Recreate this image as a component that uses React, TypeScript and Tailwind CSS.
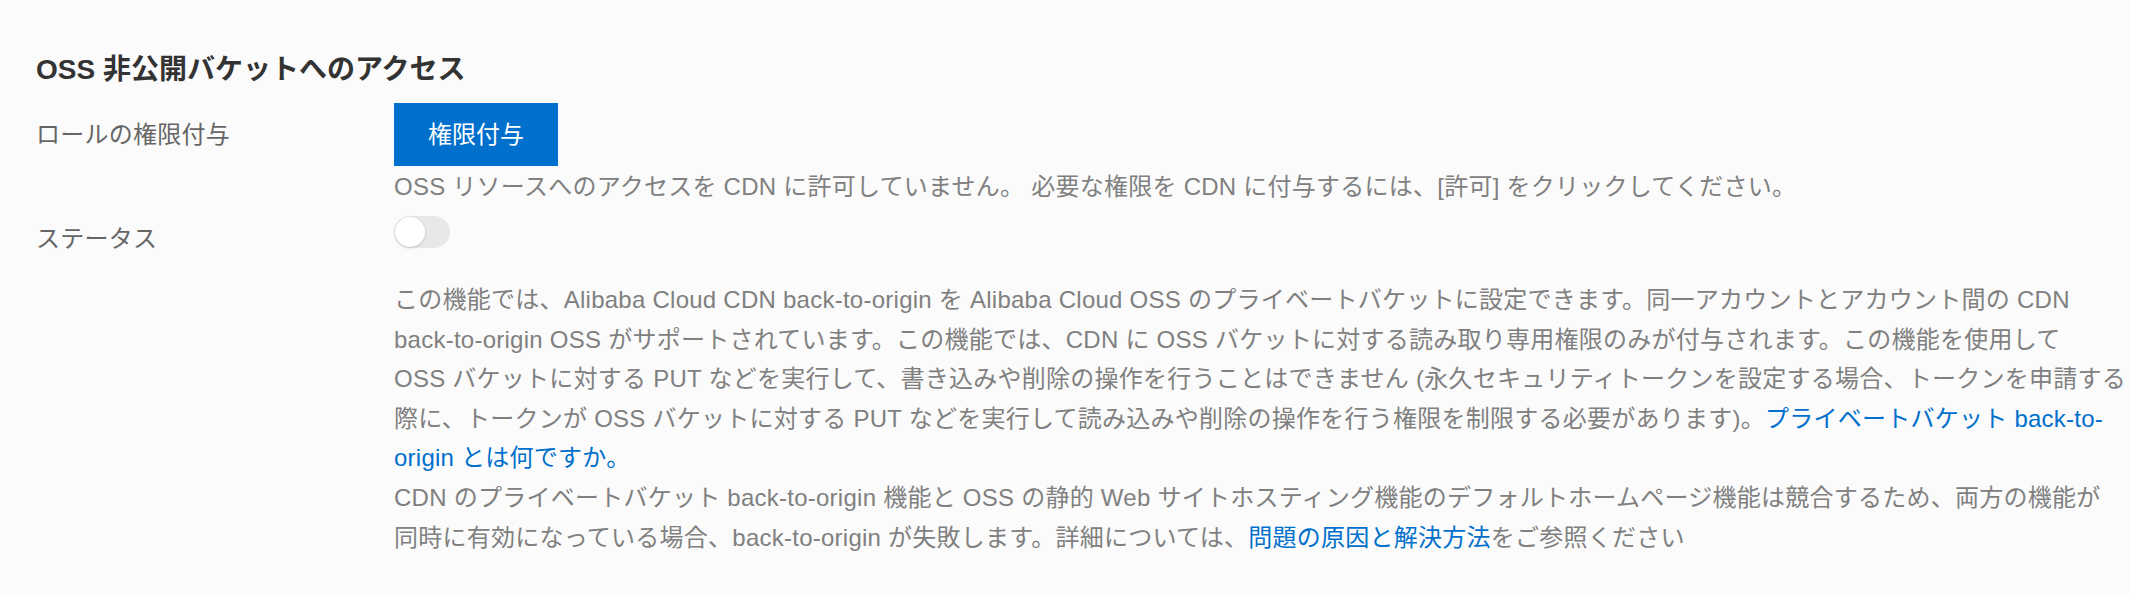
import React from "react";

export default function App() {
  return (
    <div className="min-h-[596px] w-full bg-[#fbfbfb] px-[36px] pt-[50px] font-['Liberation_Sans','Noto_Sans_CJK_JP',sans-serif] text-[24px]">
      <h2 className="text-[28px] font-bold leading-[40px] text-[#333333]">
        OSS 非公開バケットへのアクセス
      </h2>

      <div className="mt-[13px] flex items-center">
        <div className="w-[358px] leading-[40px] tracking-[0.25px] text-[#666666]">ロールの権限付与</div>
        <button className="flex h-[63px] w-[164px] items-center justify-center bg-[#0070cc] text-[24px] leading-[40px] text-white">
          権限付与
        </button>
      </div>

      <div className="ml-[358px] mt-[1px] whitespace-nowrap leading-[40px] tracking-[0.25px] text-[#808080]">
        OSS リソースへのアクセスを CDN に許可していません。 必要な権限を CDN に付与するには、[許可] をクリックしてください。
      </div>

      <div className="mt-[9px] flex items-start">
        <div className="w-[358px] pt-[3px] leading-[40px] tracking-[0.25px] text-[#666666]">ステータス</div>
        <div className="flex h-[32px] w-[56px] items-center rounded-full bg-[#e8e8e8] p-[1px]">
          <div className="h-[30px] w-[30px] rounded-full bg-white shadow-[0_1px_3px_rgba(0,0,0,0.18)]" />
        </div>
      </div>

      <div className="ml-[358px] mt-[21px] whitespace-nowrap leading-[39.6px] tracking-[0.25px] text-[#808080]">
        <div>
          この機能では、Alibaba Cloud CDN back-to-origin を Alibaba Cloud OSS のプライベートバケットに設定できます。同一アカウントとアカウント間の CDN
        </div>
        <div>
          back-to-origin OSS がサポートされています。この機能では、CDN に OSS バケットに対する読み取り専用権限のみが付与されます。この機能を使用して
        </div>
        <div>
          OSS バケットに対する PUT などを実行して、書き込みや削除の操作を行うことはできません (永久セキュリティトークンを設定する場合、トークンを申請する
        </div>
        <div>
          際に、トークンが OSS バケットに対する PUT などを実行して読み込みや削除の操作を行う権限を制限する必要があります)。
          <a className="text-[#0070cc]">プライベートバケット back-to-</a>
        </div>
        <div>
          <a className="text-[#0070cc]">origin とは何ですか。</a>
        </div>
        <div>
          CDN のプライベートバケット back-to-origin 機能と OSS の静的 Web サイトホスティング機能のデフォルトホームページ機能は競合するため、両方の機能が
        </div>
        <div>
          同時に有効になっている場合、back-to-origin が失敗します。詳細については、
          <a className="text-[#0070cc]">問題の原因と解決方法</a>
          をご参照ください
        </div>
      </div>
    </div>
  );
}
